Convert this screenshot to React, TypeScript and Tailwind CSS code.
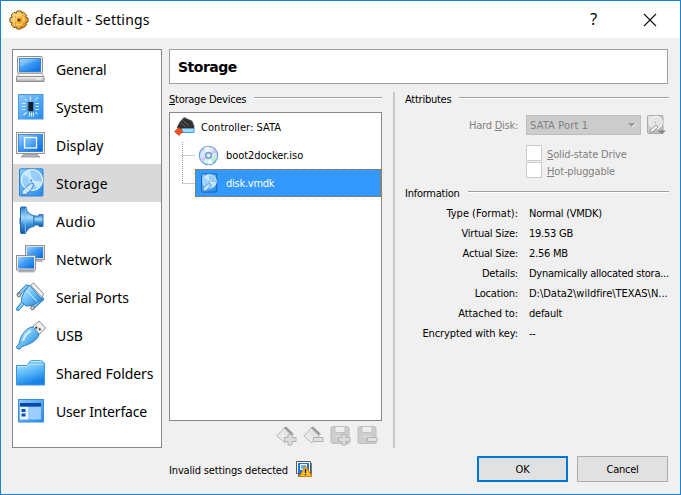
import React from "react";

const tahoma = "font-['DejaVu_Sans_Condensed','DejaVu_Sans',sans-serif]";

function Gradients() {
  return (
    <svg className="absolute h-0 w-0" aria-hidden="true">
      <defs>
        <linearGradient id="screen" x1="0" y1="0" x2="1" y2="1">
          <stop offset="0" stopColor="#9bd3ff" />
          <stop offset=".45" stopColor="#3f9cf5" />
          <stop offset="1" stopColor="#0868e4" />
        </linearGradient>
        <linearGradient id="tile" x1="0" y1="0" x2="1" y2="1">
          <stop offset="0" stopColor="#8bcbff" />
          <stop offset="1" stopColor="#2389ec" />
        </linearGradient>
        <linearGradient id="plug" x1="0" y1="0" x2="1" y2="1">
          <stop offset="0" stopColor="#d8f4ff" />
          <stop offset=".5" stopColor="#67bdf5" />
          <stop offset="1" stopColor="#1e78ce" />
        </linearGradient>
        <linearGradient id="folder" x1="0" y1="0" x2=".4" y2="1">
          <stop offset="0" stopColor="#b5eaff" />
          <stop offset=".5" stopColor="#5bb9f8" />
          <stop offset="1" stopColor="#1680e4" />
        </linearGradient>
        <linearGradient id="horn" x1="0" y1="0" x2="0" y2="1">
          <stop offset="0" stopColor="#2779c8" />
          <stop offset=".4" stopColor="#a8dcfb" />
          <stop offset=".65" stopColor="#3b93dc" />
          <stop offset="1" stopColor="#1157a0" />
        </linearGradient>
        <linearGradient id="metal" x1="0" y1="0" x2="0" y2="1">
          <stop offset="0" stopColor="#fafafa" />
          <stop offset="1" stopColor="#aaa" />
        </linearGradient>
        <linearGradient id="grey" x1="0" y1="0" x2="1" y2="1">
          <stop offset="0" stopColor="#e6e6e6" />
          <stop offset="1" stopColor="#adadad" />
        </linearGradient>
        <linearGradient id="gold" x1="0" y1="0" x2="1" y2="1">
          <stop offset="0" stopColor="#ffe9a8" />
          <stop offset=".5" stopColor="#f9b93c" />
          <stop offset="1" stopColor="#d98209" />
        </linearGradient>
        <linearGradient id="disc" x1="0" y1="0" x2="1" y2="1">
          <stop offset="0" stopColor="#a9c4fa" />
          <stop offset=".25" stopColor="#cfe4ff" />
          <stop offset=".5" stopColor="#eef4ff" />
          <stop offset=".75" stopColor="#b9f0d8" />
          <stop offset="1" stopColor="#8ec4f5" />
        </linearGradient>
      </defs>
    </svg>
  );
}

function DriveArt() {
  return (
    <>
      <circle cx="17" cy="13" r="10.5" fill="#a9d8fc" fillOpacity=".75" stroke="#e4f5ff" strokeWidth="1.1" />
      <path d="M17 13 L8 7 A10.5 10.5 0 0 1 15 2.7Z M17 13 L27 15 A10.5 10.5 0 0 1 22 22Z" fill="#d6efff" fillOpacity=".8" />
      <circle cx="16" cy="13.5" r="2" fill="#5faeea" stroke="#fff" strokeWidth=".8" />
      <path d="M16.5 16 C14 18 9.5 21 7 24.5 L7 27.5 L10.5 27.5 C14 25 18 21.5 18.5 17Z" fill="#cbe9ff" stroke="#3279b9" strokeWidth=".9" />
    </>
  );
}

const art: Record<string, React.ReactNode> = {
  General: (
    <>
      <rect x="2.5" y="3.5" width="25" height="16.5" rx="1" fill="#f0f0f0" stroke="#8d8d8d" />
      <rect x="4.500" y="5.500" width="21" height="13" fill="url(#screen)" stroke="#1670cf" strokeWidth=".8" />
      <path d="M4.500 5.500h21L4.500 14z" fill="#fff" fillOpacity=".15" />
      <path d="M3.500 20.500h24l1 3h-26z" fill="#fafafa" stroke="#9b9b9b" strokeWidth=".8" />
      <path d="M1.500 23.500h27.500v5H1.500z" fill="url(#metal)" stroke="#858585" strokeWidth=".9" />
      <path d="M21 26h5" stroke="#fff" />
    </>
  ),
  System: (
    <>
      <rect x="3.500" y="3.500" width="24.500" height="24.500" fill="url(#tile)" stroke="#4a98e0" />
      <path d="M15.500 5.500v4M20 9.500l3-3.500M11.500 9.500L10 8M7 12.500h3.500M7 15.500h3.500M7 18.500h3.500M20.500 12.500H24M20.500 15.500H24M20.500 18.500H24M11.500 21.500L8.500 24M14.500 21.500v4M16.500 21.500v4M18.500 21.500v4M20.500 21.500l2 1.500" stroke="#d4edff" strokeWidth="1.100" />
      <rect x="12.500" y="11" width="6.500" height="9.500" fill="#3f7fb8" />
      <rect x="13.500" y="11" width="4.500" height="9" fill="#161c24" />
    </>
  ),
  Display: (
    <>
      <path d="M9 25h13l3 3H6z" fill="#b5b5b5" stroke="#909090" strokeWidth=".8" />
      <rect x="1.500" y="3.500" width="28" height="21" fill="#f3f3f3" stroke="#969696" />
      <rect x="3.500" y="5.500" width="24" height="17" fill="url(#screen)" stroke="#176bcc" strokeWidth=".7" />
      <rect x="9.500" y="8.500" width="12" height="10.500" fill="url(#tile)" stroke="#fff" strokeWidth="1.300" />
    </>
  ),
  Storage: (
    <>
      <rect x="4.500" y="1.800" width="23.500" height="27.200" rx="1" fill="url(#tile)" stroke="#2c83d2" />
      <DriveArt />
    </>
  ),
  Audio: (
    <>
      <path d="M4.500 13q0-1 2-1v8q-2 0-2-1z" fill="#2a76bd" />
      <path d="M5.500 3q0-1 1-1h4.500C11.500 7 15 10 19 10.500v11C14 22 12 25 10.500 28.500H6.500q-1 0-1-1z" fill="url(#horn)" stroke="#2668a8" />
      <path d="M11 3C10 11 10 20 10.500 28" stroke="#78c0f2" fill="none" />
      <path d="M19 11h5V9.500h4v12h-4V20h-5z" fill="url(#horn)" stroke="#2e76b8" />
    </>
  ),
  Network: (
    <>
      <path d="M14 17h13l1.500 2H13z" fill="#bbb" />
      <rect x="10.500" y="2.500" width="19" height="14" fill="#ddd" stroke="#929292" />
      <rect x="12" y="4" width="16" height="11" fill="url(#screen)" />
      <path d="M5 27h13l1.500 2H3.500z" fill="#bdbdbd" stroke="#8e8e8e" strokeWidth=".6" />
      <rect x="1.500" y="12.500" width="19" height="14.500" fill="#e8e8e8" stroke="#929292" />
      <rect x="3" y="14" width="16" height="11.500" fill="url(#screen)" />
    </>
  ),
  "Serial Ports": (
    <>
      <path d="M15.500 4l3-2 10 10.500-1.500 4z" fill="#f2f2f2" stroke="#8a8a8a" />
      <path d="M8.500 21.500L3 28" stroke="#2f86c8" strokeWidth="4" strokeLinecap="round" />
      <path d="M8.500 21.500L3.200 27.800" stroke="#8fd3fa" strokeWidth="2" strokeLinecap="round" />
      <path d="M3.500 13.500L12 5M18 26.500l9.500-8.500" stroke="#2f86c8" strokeWidth="3.500" strokeLinecap="round" />
      <path d="M4 13L12 5M18 26l9-8" stroke="#a9def9" strokeWidth="1.600" strokeLinecap="round" />
      <path d="M14 4L27.500 18.500 21 22.500q-5 3-10 2.500L6.500 20.500q-.5-5 2.500-9z" fill="url(#plug)" stroke="#2581c8" />
      <path d="M11.500 9.500L22 20.500" stroke="#e1f5ff" fill="none" />
      <circle cx="4" cy="14" r="1.900" fill="#ccc" stroke="#777" />
      <circle cx="17.500" cy="27" r="1.900" fill="#ccc" stroke="#777" />
    </>
  ),
  USB: (
    <>
      <path d="M16.500 9l7.500-7 6.500 7-8 8z" fill="#f0f0f0" stroke="#898989" />
      <path d="M20.500 8l1.500 1.500M24 9.500l1.500 1.500" stroke="#444" strokeWidth="2" />
      <path d="M4 25C5 19 8 12 15 8.500l3-.5 6 7c-1 6-8 10-17 12.500l-2 2.500-3-.5-.5-2z" fill="url(#plug)" stroke="#2a81c5" />
      <path d="M8 22c2-6 5-9 8-10" stroke="#fff" strokeOpacity=".7" strokeWidth="2" fill="none" />
    </>
  ),
  "Shared Folders": (
    <>
      <path d="M12.500 10l2-5q.5-1.500 2-1.500h9q2 0 2.500 1.500l1.500 4v3h-17z" fill="#baf0fa" stroke="#4ca4df" />
      <path d="M1.500 8.500h10l3-2.500h15v22h-28z" fill="url(#folder)" stroke="#3b94dc" />
      <path d="M2.500 9.500h9l3-2.500h14" fill="none" stroke="#d4f3ff" strokeOpacity=".8" />
    </>
  ),
  "User Interface": (
    <>
      <rect x="3.500" y="4.500" width="25" height="22.500" fill="url(#tile)" stroke="#3b8cd9" />
      <rect x="5" y="8" width="21" height="3.500" fill="#0849a8" />
      <rect x="5" y="12" width="8.500" height="12.500" fill="#e9f5ff" />
      <rect x="14" y="12" width="12" height="12.500" fill="#9dccff" />
      <path d="M6.500 14h4v3h-4zm0 4.500h4v3h-4z" fill="#0b50b4" />
    </>
  ),
};

const pages = ["General", "System", "Display", "Storage", "Audio", "Network", "Serial Ports", "USB", "Shared Folders", "User Interface"];
const pageTracking: Record<string, string> = {
  General: "tracking-[-0.15px]",
  Storage: "tracking-[0.1px]",
  Audio: "tracking-[0.3px]",
  "Serial Ports": "tracking-[-0.15px]",
  "User Interface": "tracking-[-0.2px]",
};

function GroupTitle({ children, className = "" }: { children: React.ReactNode; className?: string }) {
  return (
    <div className={`flex h-[15px] items-center ${className}`}>
      <span className="whitespace-nowrap">{children}</span>
      <span className="-mt-[3px] ml-2 h-0.5 flex-1 border-t border-b border-t-[#a0a0a0] border-b-white" />
    </div>
  );
}

function Gear() {
  return (
    <svg width="20" height="20" viewBox="0 0 20 20">
      <path d="M8 1h4l.7 2 2-.7L17.500 5l-.8 2 2.300 1v4l-2.300.8.8 2.200-2.800 2.700-2-.8L12 19H8l-.8-2.100-2.200.8L2.300 15l.9-2.200L1 12V8l2.200-.8L2.300 5 5 2.300l2.200.9z" fill="url(#gold)" stroke="#7a4a14" />
      <circle cx="10" cy="10" r="5" fill="none" stroke="#fff0b6" strokeOpacity=".8" />
      <circle cx="10" cy="10" r="1.800" fill="#704512" />
      <path d="M6 7h1M13 6h1M14 13h1M6 13h1" stroke="#b56c12" />
    </svg>
  );
}

function ToolIcon({ kind, sign }: { kind: "controller" | "disk"; sign: "plus" | "minus" }) {
  return (
    <svg width="21" height="21" viewBox="0 0 21 21">
      {kind === "controller" ? (
        <>
          <path d="M.8 11L9 2l8.500 7.500L9 18z" fill="#e4e4e4" stroke="#bdbdbd" />
          <path d="M8 3l2-1.500 7.500 7-2 2z" fill="#9c9c9c" />
          <path d="M3 10.500l6 5.500M5 8.500l6 5.500" stroke="#f8f8f8" />
        </>
      ) : (
        <>
          <path d="M2.500 1.500h15l1.500 1.500v15.500h-17l-1-1V2.500z" fill="#cdcdcd" stroke="#bdbdbd" />
          <path d="M5 1.500h10v6H5z" fill="#efefef" stroke="#c2c2c2" />
          <path d="M5 11.500h9" stroke="#e0e0e0" />
        </>
      )}
      {sign === "plus" ? (
        <path d="M12 9.500h4v3h4v4h-4v3.500h-4v-3.500H8.500v-4H12z" fill="#dcdcdc" stroke="#b2b2b2" />
      ) : (
        <path d="M10.500 12.500h9.500v4h-9.500z" fill="#e0e0e0" stroke="#b2b2b2" />
      )}
    </svg>
  );
}

const information = [
  { name: "Type (Format):", value: "Normal (VMDK)", nameSpacing: "tracking-[0px]", valueSpacing: "" },
  { name: "Virtual Size:", value: "19.53 GB", nameSpacing: "tracking-[-0.2px]", valueSpacing: "" },
  { name: "Actual Size:", value: "2.56 MB", nameSpacing: "tracking-[-0.2px]", valueSpacing: "" },
  { name: "Details:", value: "Dynamically allocated stora...", nameSpacing: "tracking-[-0.2px]", valueSpacing: "" },
  { name: "Location:", value: "D:\\Data2\\wildfire\\TEXAS\\N...", nameSpacing: "tracking-[-0.2px]", valueSpacing: "tracking-[-0.02px]" },
  { name: "Attached to:", value: "default", nameSpacing: "tracking-[-0.1px]", valueSpacing: "" },
  { name: "Encrypted with key:", value: "--", nameSpacing: "tracking-[-0.1px]", valueSpacing: "" },
];

export default function App() {
  return (
    <div className={`flex h-[495px] w-[681px] flex-col overflow-hidden border border-[#1883d7] bg-[#f0f0f0] text-[11px] leading-[15px] tracking-[-0.25px] text-black ${tahoma}`}>
      <Gradients />
      <header className="flex h-[37px] shrink-0 items-center bg-white pl-2">
        <Gear />
        <span className="ml-1.5 font-['Noto_Sans',sans-serif] text-[14px] tracking-[0.17px]">default - Settings</span>
        <span className="mr-[46px] ml-auto font-['Noto_Sans',sans-serif] text-[16px]">?</span>
        <svg className="mr-[23px]" width="14" height="14" viewBox="0 0 14 14">
          <path d="M1 1l12 12M13 1L1 13" stroke="#111" strokeWidth="1.100" />
        </svg>
      </header>
      <main className="flex h-[410px] shrink-0 pt-[11px] pl-[11px]">
        <nav className="h-[399px] w-[150px] shrink-0 border border-[#828790] bg-white">
          {pages.map((page) => (
            <div key={page} className={`flex h-[38px] items-center pl-0.5 ${page === "Storage" ? "bg-[#d9d9d9]" : ""}`}>
              <svg width="32" height="32" viewBox="0 0 32 32">{art[page]}</svg>
              <span className={`ml-[9px] font-['Noto_Sans',sans-serif] text-[14px] whitespace-nowrap ${pageTracking[page] ?? "tracking-[-0.05px]"}`}>{page}</span>
            </div>
          ))}
        </nav>
        <section className="ml-[7px] w-[500px] shrink-0">
          <h1 className="flex h-[35px] w-[499px] items-center border border-[#a0a0a0] bg-white pt-0.5 pl-2 font-['DejaVu_Sans',sans-serif] text-[14px] font-bold tracking-[-0.5px]">Storage</h1>
          <div className="flex">
            <div className="w-[213px] shrink-0">
              <GroupTitle className="mt-2"><u>S</u>torage Devices</GroupTitle>
              <div className="mt-[5px] h-[309px] border border-[#828790] bg-white">
                <div className="flex h-7 items-center pl-1">
                  <svg width="22" height="22" viewBox="0 0 22 22">
                    <path d="M3 11.500L6 6l4-4.500 8 3.500 2 5v3.500H7z" fill="#303030" stroke="#5c5c5c" strokeWidth=".8" />
                    <path d="M7 7l5 4M9 4.500l6 5" stroke="#686868" />
                    <path d="M8 12.500h12v4H7z" fill="#a5dcfb" stroke="#4399d8" />
                    <path d="M5 11.500l4 4-4 4-4.500-4z" fill="#ee5225" stroke="#c8350e" strokeWidth=".6" />
                  </svg>
                  <span className="ml-[5px] tracking-[0.05px]">Controller: SATA</span>
                </div>
                <div className="flex h-14">
                  <svg width="25" height="56" viewBox="0 0 25 56">
                    <path d="M12.500 1v42M12.500 14.500H25M12.500 42.500H25" fill="none" stroke="#999" strokeDasharray="1 1" />
                  </svg>
                  <div className="flex-1">
                    <div className="flex h-7 items-center pl-[3px]">
                      <svg width="21" height="21" viewBox="0 0 21 21">
                        <circle cx="10.500" cy="10.500" r="9.200" fill="url(#disc)" stroke="#6b9fd6" strokeWidth="1.100" />
                        <path d="M10.500 10.500L6 2.500 11 1.500zM10.500 10.500L15 18.500l-5 1z" fill="#fff" fillOpacity=".8" />
                        <path d="M10.500 10.500L16 3.500l3 4z" fill="#d9bdf5" fillOpacity=".9" />
                        <path d="M10.500 10.500L5 17.500l-3-4z" fill="#d3c0fa" fillOpacity=".9" />
                        <circle cx="10.500" cy="10.500" r="3.200" fill="#9cc6ea" stroke="#5d93c2" />
                        <circle cx="10.500" cy="10.500" r="1.300" fill="#fff" />
                      </svg>
                      <span className="ml-[7px] tracking-[-0.05px]">boot2docker.iso</span>
                    </div>
                    <div className="flex h-7 items-center border border-dotted border-[#cc6600] bg-[#3399ff] pl-[3px] text-white">
                      <svg width="20" height="20" viewBox="2 0 28 31">
                        <rect x="4.500" y="1.500" width="23.500" height="28" rx="1" fill="url(#tile)" stroke="#1264ad" strokeWidth="1.500" />
                        <DriveArt />
                      </svg>
                      <span className="ml-[7px]">disk.vmdk</span>
                    </div>
                  </div>
                </div>
              </div>
              <div className="mt-1 flex h-[21px] gap-1.5 pl-[107px]">
                <ToolIcon kind="controller" sign="plus" />
                <ToolIcon kind="controller" sign="minus" />
                <ToolIcon kind="disk" sign="plus" />
                <ToolIcon kind="disk" sign="minus" />
              </div>
            </div>
            <div className="mt-2 ml-[11px] h-[356px] w-0.5 shrink-0 bg-[#c8c8c8]" />
            <div className="ml-[10px] w-[264px] shrink-0">
              <GroupTitle className="mt-2">Attributes</GroupTitle>
              <div className="mt-2 flex h-5 items-center text-[#808080]">
                <span className="w-[113px] text-right">Hard <u>D</u>isk:</span>
                <div className="ml-2 flex h-5 w-[115px] items-center justify-between border border-[#bfbfbf] bg-[#cccccc] pr-1 pl-[3px]">
                  <span className="tracking-[0.15px]">SATA Port 1</span>
                  <svg width="8" height="6"><path d="M0 1h8L4 5z" fill="#989898" /><path d="M4 5l4-4" stroke="#fff" /></svg>
                </div>
                <svg className="ml-1.5" width="20" height="20" viewBox="0 0 20 20">
                  <rect x=".5" y=".5" width="15.500" height="18" rx="1" fill="url(#grey)" stroke="#aaa" />
                  <circle cx="9" cy="7.500" r="6.300" fill="#e2e2e2" stroke="#fff" />
                  <circle cx="8.500" cy="7.500" r="1.500" fill="#aaa" stroke="#fff" />
                  <path d="M9 10l-6 5v2h3l5-5z" fill="#eee" stroke="#999" />
                  <path d="M11 15.500h8l-4 3.500z" fill="#858585" />
                </svg>
              </div>
              <div className="mt-[10px] flex flex-col gap-px pl-[121px] text-[#808080]">
                <div className="flex h-4 items-center"><span className="mr-[5px] h-4 w-4 border border-[#cccccc] bg-white" /><span className="pt-0.5 tracking-[-0.15px]"><u>S</u>olid-state Drive</span></div>
                <div className="flex h-4 items-center"><span className="mr-[5px] h-4 w-4 border border-[#cccccc] bg-white" /><span className="pt-0.5 tracking-[-0.15px]"><u>H</u>ot-pluggable</span></div>
              </div>
              <GroupTitle className="mt-2">Information</GroupTitle>
              <dl className="mt-0.5">
                {information.map(({ name, value, nameSpacing, valueSpacing }) => (
                  <div key={name} className="flex h-5 items-center whitespace-nowrap">
                    <dt className={`w-[113px] shrink-0 text-right ${nameSpacing}`}>{name}</dt>
                    <dd className={`ml-[11px] ${valueSpacing}`}>{value}</dd>
                  </div>
                ))}
              </dl>
            </div>
          </div>
        </section>
      </main>
      <footer className="flex h-[42px] items-center pl-[168px]">
        <span className="pt-0.5 tracking-[-0.15px]">Invalid settings detected</span>
        <svg className="ml-2" width="16" height="16" viewBox="0 0 16 16">
          <path d="M2 2h14v14H2z" fill="#777" />
          <path d="M.5.5h14v12H.5z" fill="#fff" stroke="#555" />
          <path d="M2 2h11v10H2z" fill="#1d72dd" />
          <path d="M4.500 3.500h6v5h-6z" fill="#68adfa" stroke="#fff" />
          <path d="M9.500 5L16 15.500H3.500z" fill="#ffc12c" stroke="#e47d00" />
          <path d="M9.500 8v4M9.500 13v1.200" stroke="#111" strokeWidth="1.300" />
        </svg>
        <button className="ml-auto h-[26px] w-[91px] border-2 border-[#0078d7] bg-[#e1e1e1] pt-px">OK</button>
        <button className="mr-3 ml-[9px] h-[26px] w-[91px] border border-[#adadad] bg-[#e1e1e1] pt-px">Cancel</button>
      </footer>
    </div>
  );
}
